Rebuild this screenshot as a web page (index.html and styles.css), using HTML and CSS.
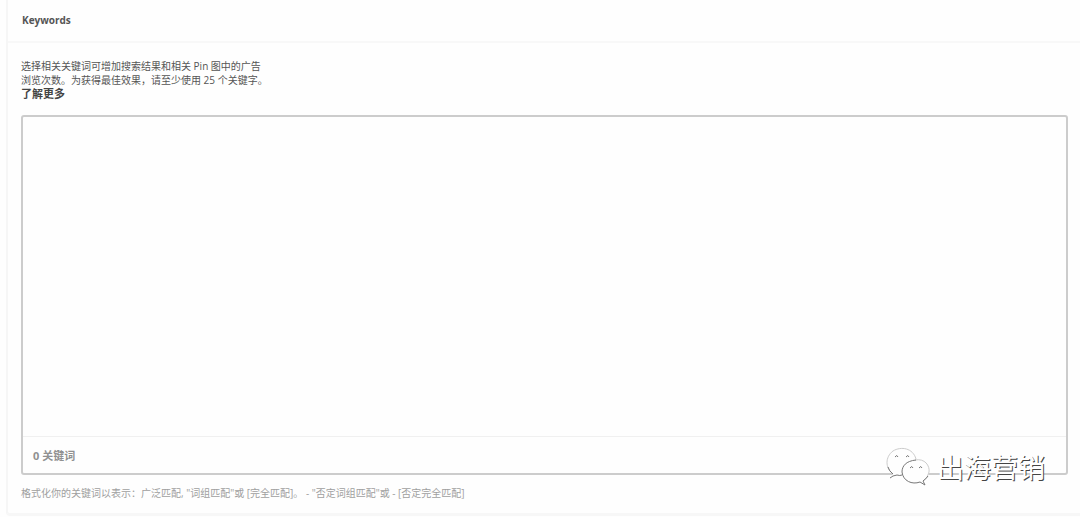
FILE: index.html
```html
<!DOCTYPE html>
<html lang="zh-CN">
<head>
<meta charset="utf-8">
<meta name="viewport" content="width=device-width, initial-scale=1">
<title>Keywords</title>
<link rel="stylesheet" href="styles.css">
</head>
<body>
<main class="panel">
  <header class="panel-header">
    <h1 class="panel-title"><label for="keywords">Keywords</label></h1>
  </header>
  <section class="panel-body">
    <p class="intro">选择相关关键词可增加搜索结果和相关 Pin 图中的广告<br>浏览次数。为获得最佳效果，请至少使用 25 个关键字。<br><a class="more" href="#">了解更多</a></p>
    <div class="editor">
      <textarea class="editor-input" id="keywords" aria-describedby="hint"></textarea>
      <div class="editor-count">0 关键词</div>
      <div class="watermark">
        <svg class="watermark-icon" viewBox="0 0 46 42" aria-hidden="true">
          <path class="bubble" d="M8 27C0 21 0 10 8 4C16 -1 29 2 32 13C23 14 17 20 18 28Q14 29 12 28L5 31Z"/>
          <path class="outline faint" d="M8 27C0 21 0 10 8 4C16 -1 28 1 31 12"/>
          <path class="outline" d="M3 20Q4 24 8 27M5 31L8 29L12 28Q15 29 17 28"/>
          <path class="bubble" d="M32 13C40 13 45 19 44 25Q43 31 38 34L40 38L34 36C25 39 17 34 17 25Q18 14 32 13Z"/>
          <path class="outline faint" d="M30 13C40 11 45 19 44 25Q43 31 38 34"/>
          <path class="outline" d="M31 13C21 14 17 19 17 25C18 34 27 38 35 35L40 38L38 34Q41 32 43 29"/>
          <path class="outline" d="M10 10q2-3 3 0M21 10q2-3 3 0M25 21q2-3 3 0M34 21q2-3 3 0"/>
        </svg>
        <span class="watermark-text">出海营销</span>
      </div>
    </div>
    <p class="hint" id="hint">格式化你的关键词以表示：广泛匹配, "词组匹配"或 [完全匹配]。 - "否定词组匹配"或 - [否定完全匹配]</p>
  </section>
</main>
</body>
</html>
```
FILE: styles.css
```css
* {
  box-sizing: border-box;
}

body {
  margin: 0;
  background: #fefefe;
  color: #555;
  font-family: "Open Sans", "Noto Sans CJK SC", sans-serif;
  font-size: 10px;
  line-height: 14px;
}

.panel {
  margin-left: 6px;
  border-left: 2px solid #f6f6f6;
  border-bottom: 3px solid #f7f7f7;
  border-bottom-left-radius: 4px;
}

.panel-header {
  padding: 13px 14px 14px;
  border-bottom: 2px solid #f8f8f8;
}

.panel-title {
  margin: 0;
  font-size: 10px;
  font-weight: 700;
}

.panel-body {
  padding: 16px 12px 13px 13px;
}

.intro {
  margin: 0 0 14px;
}

.more {
  color: #444;
  font-size: 11px;
  font-weight: 700;
  text-decoration: none;
}

.editor {
  position: relative;
  border: 2px solid #ccc;
  border-radius: 3px;
}

.editor-input {
  display: block;
  width: 100%;
  height: 319px;
  padding: 10px;
  border: 0;
  outline: 0;
  resize: none;
  background: transparent;
  color: #555;
  font: inherit;
}

.editor-count {
  padding: 12px 10px 10px;
  border-top: 1px solid #f0f0f0;
  color: #909090;
  font-size: 11px;
  font-weight: 700;
}

.watermark {
  position: absolute;
  right: 21px;
  bottom: -16px;
  display: flex;
  align-items: center;
  gap: 6px;
}

.watermark-icon {
  width: 46px;
  height: 42px;
}

.bubble {
  fill: #fefefe;
}

.outline {
  fill: none;
  stroke: #777;
  stroke-width: 1;
}

.faint {
  stroke: #ccc;
}

.watermark-text {
  color: #fff;
  font-size: 27px;
  line-height: 40px;
  text-shadow: 1px 1px 0 #444;
}

.hint {
  margin: 11px 0 0;
  color: #a0a0a0;
}
```
